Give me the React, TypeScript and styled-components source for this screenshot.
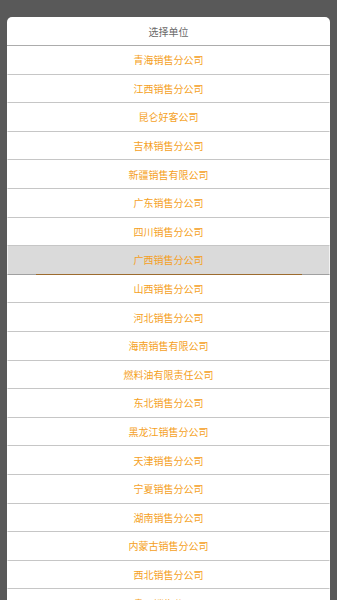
import React from "react";
import styled, { createGlobalStyle } from "styled-components";

const GlobalStyle = createGlobalStyle`
  html, body {
    margin: 0;
    padding: 0;
    background: #595959;
  }
  body {
    font-family: "Noto Sans CJK SC", "Noto Sans", sans-serif;
  }
`;

const Screen = styled.div`
  height: 600px;
  overflow: hidden;
  padding: 17px 7px 0;
  box-sizing: border-box;
`;

const Sheet = styled.div`
  background: #fff;
  border-radius: 5px 5px 0 0;
  overflow: hidden;
  display: flex;
  flex-direction: column;
`;

const Header = styled.div`
  flex: 0 0 auto;
  height: 29px;
  box-sizing: border-box;
  border-bottom: 1px solid #acacac;
  display: flex;
  align-items: center;
  justify-content: center;
  font-size: 10px;
  color: #6a6a6a;
`;

const Option = styled.div<{ $selected?: boolean }>`
  position: relative;
  flex: 0 0 auto;
  height: 28.6px;
  box-sizing: border-box;
  border-bottom: 1px solid ${p => (p.$selected ? "#a0a0a0" : "#c6c6c6")};
  border-left: 1px solid ${p => (p.$selected ? "#f2f2f2" : "transparent")};
  border-right: 1px solid ${p => (p.$selected ? "#f2f2f2" : "transparent")};
  background: ${p => (p.$selected ? "#dadada" : "#fff")};
  display: flex;
  align-items: center;
  justify-content: center;
  font-size: 10px;
  color: #f59f1d;

  ${p =>
    p.$selected &&
    `
    &::after {
      content: "";
      position: absolute;
      left: 28px;
      right: 27px;
      bottom: -1px;
      height: 1px;
      background: #9c6b2e;
      z-index: 1;
    }
  `}
`;

const units = [
  "青海销售分公司",
  "江西销售分公司",
  "昆仑好客公司",
  "吉林销售分公司",
  "新疆销售有限公司",
  "广东销售分公司",
  "四川销售分公司",
  "广西销售分公司",
  "山西销售分公司",
  "河北销售分公司",
  "海南销售有限公司",
  "燃料油有限责任公司",
  "东北销售分公司",
  "黑龙江销售分公司",
  "天津销售分公司",
  "宁夏销售分公司",
  "湖南销售分公司",
  "内蒙古销售分公司",
  "西北销售分公司",
  "贵州销售分公司",
];

export default function App() {
  const selected = "广西销售分公司";
  return (
    <>
      <GlobalStyle />
      <Screen>
        <Sheet>
          <Header>选择单位</Header>
          {units.map(name => (
            <Option key={name} $selected={name === selected}>
              {name}
            </Option>
          ))}
        </Sheet>
      </Screen>
    </>
  );
}
